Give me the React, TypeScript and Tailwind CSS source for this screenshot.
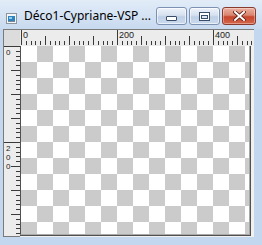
import React from "react";

const SCALE = 0.48;

function HRuler() {
  const ticks: React.ReactNode[] = [];
  for (let u = 0; u <= 480; u += 10) {
    const x = Math.round(1 + u * SCALE) + 0.5;
    let y1 = 11;
    if (u % 200 === 0) y1 = 0;
    else if (u % 50 === 0) y1 = 6;
    ticks.push(<line key={u} x1={x} x2={x} y1={y1} y2={15} stroke="#3a3a3a" />);
  }
  const labels = [0, 200, 400].map((u) => (
    <text key={u} x={Math.round(1 + u * SCALE) + 2} y={8} fontSize={9} fill="#222" fontFamily="'Liberation Sans', Arial, sans-serif">
      {u}
    </text>
  ));
  return (
    <svg width="234" height="16" className="block" shapeRendering="crispEdges">
      {ticks}
      {labels}
    </svg>
  );
}

function VRuler() {
  const ticks: React.ReactNode[] = [];
  for (let u = 0; u <= 390; u += 10) {
    const y = Math.round(u * SCALE) + 0.5;
    let x1 = 12;
    if (u % 200 === 0) x1 = 0;
    else if (u % 50 === 0) x1 = 7;
    ticks.push(<line key={u} x1={x1} x2={16} y1={y} y2={y} stroke="#3a3a3a" />);
  }
  const label = (u: number) => {
    const base = Math.round(u * SCALE);
    return String(u)
      .split("")
      .map((d, i) => (
        <text key={`${u}-${i}`} x={2} y={base + 9 + i * 9} fontSize={8} fill="#222" fontFamily="'Liberation Sans', Arial, sans-serif">
          {d}
        </text>
      ));
  };
  return (
    <svg width="16" height="190" className="block" shapeRendering="crispEdges">
      {ticks}
      {label(0)}
      {label(200)}
    </svg>
  );
}

function AppIcon() {
  return (
    <svg width="11" height="11" viewBox="0 0 11 11" className="block">
      <rect x="0.5" y="0.5" width="10" height="10" fill="#f4f6f8" stroke="#8d96a0" />
      <rect x="2" y="3" width="7" height="5" fill="#2f84c0" />
      <rect x="3" y="4" width="3" height="2" fill="#8fd0f0" />
      <rect x="2" y="8" width="7" height="1" fill="#7a8896" />
    </svg>
  );
}

function MinGlyph() {
  return (
    <svg width="11" height="5" viewBox="0 0 11 5" className="block">
      <rect x="0.5" y="0.5" width="10" height="4" rx="0.5" fill="#fff" stroke="#3a4d68" />
    </svg>
  );
}

function MaxGlyph() {
  return (
    <svg width="11" height="9" viewBox="0 0 11 9" className="block">
      <rect x="0.5" y="0.5" width="10" height="8" fill="#fff" stroke="#3a4d68" />
      <rect x="2.5" y="3.5" width="6" height="3" fill="#dde6f2" stroke="#3a4d68" />
    </svg>
  );
}

function CloseGlyph() {
  return (
    <svg width="13" height="10" viewBox="0 0 13 10" className="block">
      <path d="M2 1 L11 9 M11 1 L2 9" stroke="#5a1e14" strokeWidth="3.6" strokeLinecap="square" />
      <path d="M2 1 L11 9 M11 1 L2 9" stroke="#ffffff" strokeWidth="2" strokeLinecap="square" />
    </svg>
  );
}

export default function App() {
  return (
    <div className="w-[262px] h-[245px] overflow-hidden flex flex-col bg-[#c3d7ee] font-['Noto_Sans','Open_Sans',sans-serif]">
      {/* title bar */}
      <div className="h-[30px] flex items-start bg-[linear-gradient(#e2ecf8,#c8daef)]">
        <div className="ml-[6px] mt-[13px]">
          <AppIcon />
        </div>
        <div className="ml-[7px] mt-[8px] text-[12px] leading-[16px] text-black whitespace-nowrap">
          Déco1-Cypriane-VSP ...
        </div>
        <div className="ml-auto mt-[7px] mr-[6px] flex gap-[2px]">
          <div className="w-[31px] h-[18px] rounded-[3px] border border-[#7d92b2] bg-[linear-gradient(#eef3fa,#d6e1ef_45%,#bfd0e6_55%,#cbdaee)] flex items-end justify-center pb-[3px] shadow-[inset_0_0_0_1px_rgba(255,255,255,0.6)]">
            <MinGlyph />
          </div>
          <div className="w-[31px] h-[18px] rounded-[3px] border border-[#7d92b2] bg-[linear-gradient(#eef3fa,#d6e1ef_45%,#bfd0e6_55%,#cbdaee)] flex items-center justify-center shadow-[inset_0_0_0_1px_rgba(255,255,255,0.6)]">
            <MaxGlyph />
          </div>
          <div className="w-[34px] h-[18px] rounded-[3px] border border-[#8a3a2c] bg-[linear-gradient(#ecb1a2,#d98570_45%,#c5462d_55%,#d4664a)] flex items-center justify-center shadow-[inset_0_0_0_1px_rgba(255,255,255,0.35)]">
            <CloseGlyph />
          </div>
        </div>
      </div>

      {/* client */}
      <div className="flex-1 flex pl-[3px] pr-[8px] pb-[8px]">
        <div className="flex-1 flex flex-col bg-[#f0f0f0] border-t border-l border-[#7a7a7a]">
          <div className="flex h-[16px]">
            <div className="w-[16px] bg-[#dcdcdc]" />
            <div className="flex-1 bg-[#ececec] overflow-hidden">
              <HRuler />
            </div>
          </div>
          <div className="flex-1 flex">
            <div className="w-[16px] bg-[#ececec] overflow-hidden border-b border-[#7a7a7a]">
              <VRuler />
            </div>
            <div className="flex-1 flex flex-col pr-[3px] pb-[1px]">
              <div className="flex-1 border-r border-b border-[#505050]">
                <div className="w-full h-full border-r border-b border-[#a8a8a8] border-l border-l-[#505050] bg-[image:conic-gradient(#cbcbcb_0_25%,#ffffff_0_50%,#cbcbcb_0_75%,#ffffff_0)] bg-[length:32px_32px]" />
              </div>
            </div>
          </div>
        </div>
      </div>
    </div>
  );
}
